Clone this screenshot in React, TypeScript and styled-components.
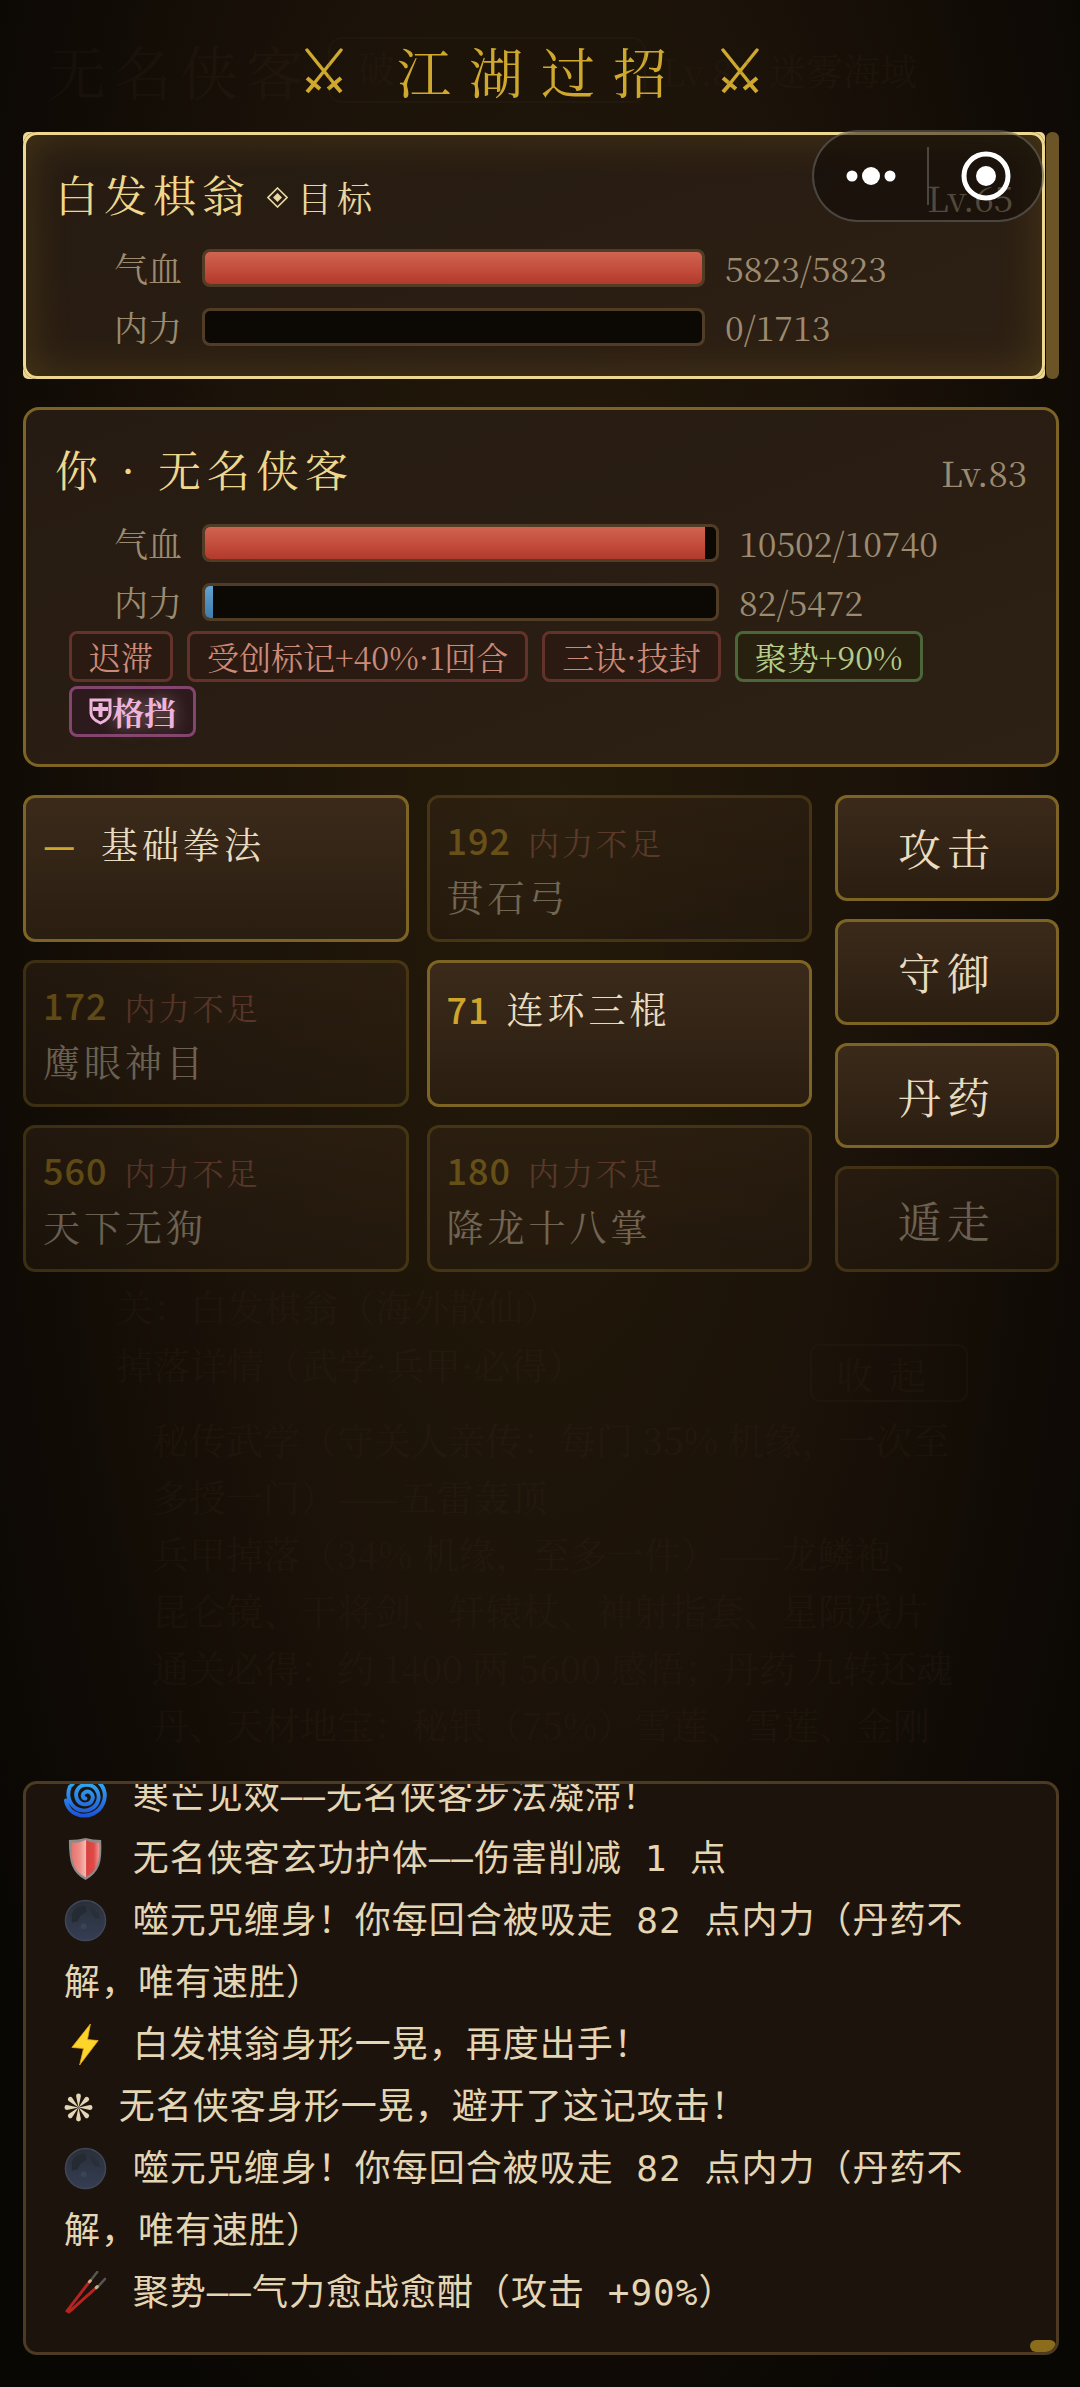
import React from 'react';
import styled, { createGlobalStyle, css } from 'styled-components';

const SERIF = `"Noto Serif CJK SC", "Noto Serif SC", "Liberation Serif", "Noto Sans CJK SC", serif`;
const SANS = `"Noto Sans CJK SC", "Noto Sans", sans-serif`;
const MONO = `"DejaVu Sans Mono", "Noto Sans CJK SC", monospace`;

const GlobalStyle = createGlobalStyle`
  *, *::before, *::after { box-sizing: border-box; }
  body { margin: 0; background: #0a0704; }
  h1, h2, p, ul { margin: 0; padding: 0; font-weight: 400; }
  ul { list-style: none; }
  button { font: inherit; color: inherit; margin: 0; }
`;

const Page = styled.main`
  position: relative;
  display: flex;
  flex-direction: column;
  min-height: 100vh;
  padding: 0 21px 32px 23px;
  overflow: hidden;
  font-family: ${SERIF};
  color: #e8dcc0;
  background: radial-gradient(ellipse 62% 78% at 50% 34%, #241a0a 0%, #1b1209 52%, #0f0a05 84%, #090704 100%);
`;

/* The page underneath, barely showing through the dark battle overlay */
const Underlay = styled.div`
  position: absolute;
  inset: 0;
  color: #4a3826;
  opacity: 0.12;
  pointer-events: none;
  font-size: 37px;
  line-height: 57px;
`;

const UnderHead = styled.div`
  display: flex;
  align-items: center;
  gap: 16px;
  height: 140px;
  padding-left: 48px;
`;

const UnderName = styled.span`
  font-size: 58px;
  letter-spacing: 8px;
`;

const UnderPill = styled.span`
  width: 318px;
  height: 66px;
  padding-left: 28px;
  border: 2px solid currentColor;
  border-radius: 14px;
`;

const UnderBody = styled.div`
  margin-top: 1137px;
  padding: 0 112px 0 116px;
`;

const UnderRow = styled.div`
  display: flex;
  justify-content: space-between;
  align-items: center;
  height: 58px;
`;

const UnderFold = styled.span`
  width: 158px;
  height: 58px;
  margin-top: 18px;
  border: 2px solid currentColor;
  border-radius: 10px;
  text-align: center;
  letter-spacing: 16px;
`;

const UnderText = styled.div`
  margin-top: 18px;
  padding-left: 36px;
  white-space: nowrap;
`;

const Header = styled.header`
  display: flex;
  justify-content: center;
  align-items: center;
  height: 132px;
  padding-top: 10px;
  color: #cfa82e;
`;

const Title = styled.h1`
  display: flex;
  align-items: center;
  gap: 36px;
  font-size: 54px;
  line-height: 72px;
  letter-spacing: 18px;
  white-space: nowrap;
`;

const SwordSvg = styled.svg`
  width: 38px;
  height: 46px;
  margin-right: 18px;
`;

const Stack = styled.div`
  position: relative;
  display: flex;
  flex-direction: column;
  gap: 28px;
`;

const EnemyScroll = styled.div`
  display: flex;
  gap: 1px;
`;

const EnemyClip = styled.div`
  flex: 1;
  overflow: hidden;
  border-radius: 5px;
`;

const ScrollThumb = styled.div`
  width: 13px;
  border-radius: 6px;
  background: #6b5426;
`;

const Card = styled.section<{ $target?: boolean }>`
  padding: 28px 29px 27px;
  border: 3px solid #7d6424;
  border-radius: 16px;
  background: linear-gradient(160deg, #261b12, #2d2014);
  ${(p) =>
    p.$target &&
    css`
      padding-bottom: 31px;
      border-color: #eed78f;
      border-radius: 14px;
      box-shadow: 0 0 0 5px #eed78f, inset 0 0 44px rgba(200, 160, 40, 0.2);
    `}
`;

const CardHead = styled.div`
  display: flex;
  align-items: center;
  height: 62px;
  margin-bottom: 24px;
`;

const Name = styled.h2`
  font-size: 43px;
  line-height: 62px;
  letter-spacing: 6px;
  color: #efd88e;
`;

const TargetMark = styled.span`
  display: flex;
  align-items: center;
  gap: 9px;
  margin-left: 16px;
  padding-top: 6px;
  font-size: 35px;
  letter-spacing: 5px;
  color: #e8d7a0;
`;

const Level = styled.span`
  margin-left: auto;
  padding-top: 6px;
  font-size: 35px;
  color: #9c8b70;
`;

const Stats = styled.div`
  display: grid;
  gap: 22px;
`;

const StatRow = styled.div`
  display: flex;
  align-items: center;
  gap: 20px;
  height: 37px;
  font-size: 34px;
  line-height: 37px;
  color: #9c8b70;
`;

const StatLabel = styled.span`
  width: 127px;
  text-align: right;
`;

const Track = styled.div`
  flex: 1;
  height: 38px;
  overflow: hidden;
  border: 3px solid #513c26;
  border-radius: 8px;
  background: #0c0804;
`;

const Fill = styled.div<{ $kind: 'hp' | 'mp' }>`
  height: 100%;
  background: ${(p) =>
    p.$kind === 'hp' ? 'linear-gradient(#cf6450, #c24a3a 60%, #b03a2d)' : 'linear-gradient(#62a3d0, #3d7cab)'};
`;

const StatValue = styled.span`
  width: 288px;
  white-space: nowrap;
`;

const Tags = styled.ul`
  display: flex;
  flex-wrap: wrap;
  gap: 4px 14px;
  margin-top: 11px;
  padding: 0 14px;
`;

const tagTone = {
  bad: css`
    color: #cc8a78;
    border-color: #62322b;
    background: #2a1a12;
  `,
  good: css`
    color: #b4cd88;
    border-color: #4b6638;
    background: #28200f;
  `,
  guard: css`
    color: #efb4dc;
    border-color: #834470;
    background: #2d1a1c;
    font-weight: 700;
    text-shadow: 0 0 16px rgba(240, 200, 200, 0.5);
  `,
};

const Tag = styled.li<{ $tone: keyof typeof tagTone }>`
  display: flex;
  align-items: center;
  height: 51px;
  padding: 0 17px;
  border: 3px solid;
  border-radius: 8px;
  font-size: 32px;
  line-height: 45px;
  white-space: nowrap;
  ${(p) => tagTone[p.$tone]}
`;

const Board = styled.div`
  display: flex;
  gap: 23px;
`;

const Skills = styled.div`
  flex: 1;
  display: grid;
  grid-template-columns: 1fr 1fr;
  grid-auto-rows: 147px;
  gap: 18px;
`;

const panelButton = css`
  border: 3px solid #7d6424;
  border-radius: 12px;
  background: linear-gradient(#3b2a1a, #2a1e11);
  &:disabled {
    opacity: 0.4;
  }
`;

const Skill = styled.button`
  ${panelButton}
  display: flex;
  flex-wrap: wrap;
  align-items: baseline;
  align-content: flex-start;
  column-gap: 17px;
  padding: 18px 17px 0;
  text-align: left;
  letter-spacing: 3px;
  &:disabled {
    padding-top: 14px;
  }
`;

const Cost = styled.span`
  min-width: 41px;
  font-family: ${SANS};
  font-size: 36px;
  font-weight: 500;
  line-height: 54px;
  letter-spacing: 1px;
  color: #d0a52c;
`;

const Reason = styled.span`
  font-size: 31px;
  line-height: 54px;
  color: #b06a58;
`;

const SkillName = styled.span<{ $below?: boolean }>`
  flex-basis: ${(p) => (p.$below ? '100%' : 'auto')};
  font-size: 37px;
  line-height: 54px;
  letter-spacing: 4px;
  color: #e8dcc0;
`;

const Actions = styled.div`
  display: grid;
  grid-auto-rows: 1fr;
  gap: 18px;
  width: 224px;
`;

const Action = styled.button`
  ${panelButton}
  padding: 0;
  font-size: 43px;
  letter-spacing: 6px;
  color: #e8dcc0;
`;

const Log = styled.section`
  position: relative;
  display: flex;
  flex-direction: column;
  justify-content: flex-end;
  height: 574px;
  margin-top: auto;
  padding: 0 38px 28px;
  overflow: hidden;
  border: 3px solid #4d3a22;
  border-radius: 14px;
  background: #1c130d;
`;

const Entry = styled.p`
  flex: none;
  font-family: ${MONO};
  font-size: 36px;
  line-height: 62px;
  letter-spacing: 1px;
  color: #e4d6b4;
`;

const EntryIcon = styled.svg`
  width: 43px;
  height: 43px;
  margin-right: 3px;
  vertical-align: -9px;
`;

const StarIcon = styled(EntryIcon)`
  width: 29px;
  height: 29px;
  vertical-align: -3px;
`;

const LogThumb = styled.span`
  position: absolute;
  right: 0;
  bottom: 0;
  width: 26px;
  height: 12px;
  border-radius: 6px;
  background: #8b6c1c;
`;

const Capsule = styled.div`
  position: absolute;
  top: 130px;
  right: 36px;
  display: flex;
  align-items: center;
  width: 232px;
  height: 92px;
  border: 2px solid rgba(255, 255, 255, 0.22);
  border-radius: 46px;
  background: rgba(10, 6, 4, 0.5);
`;

const CapsuleButton = styled.button`
  flex: 1;
  display: flex;
  justify-content: center;
  align-items: center;
  height: 100%;
  padding: 0;
  border: 0;
  background: none;
`;

const CapsuleRule = styled.span`
  width: 2px;
  height: 58px;
  background: rgba(255, 255, 255, 0.22);
`;

const Swords = () => (
  <SwordSvg viewBox="0 0 38 46" fill="none" stroke="currentColor" aria-hidden="true">
    <path d="M2 2 31 38M36 2 7 38" strokeWidth="3.4" strokeLinecap="round" />
    <path d="M23 41 36 30M15 41 2 30" strokeWidth="4" />
    <path d="M29 36 36 44M9 36 2 44" strokeWidth="4" />
  </SwordSvg>
);

const Diamond = () => (
  <svg width="21" height="21" viewBox="0 0 21 21" aria-hidden="true">
    <path d="M10.5 1 20 10.5 10.5 20 1 10.5Z" fill="none" stroke="currentColor" strokeWidth="1.6" />
    <path d="M10.5 6 15 10.5 10.5 15 6 10.5Z" fill="currentColor" />
  </svg>
);

const GuardShield = () => (
  <svg width="23" height="27" viewBox="0 0 23 27" fill="none" stroke="currentColor" aria-hidden="true">
    <path d="M2 2H21V15C21 20 16 23 11.500 25C7 23 2 20 2 15Z" strokeWidth="3" />
    <path d="M11.500 5V19M4 11H19" strokeWidth="4" />
  </svg>
);

const Cyclone = () => (
  <EntryIcon viewBox="0 0 44 44" aria-hidden="true">
    <defs>
      <linearGradient id="cyc" x1="0" y1="0" x2="0" y2="1">
        <stop offset="0" stopColor="#35b4f5" />
        <stop offset="1" stopColor="#1d55d8" />
      </linearGradient>
    </defs>
    <path
      d="M22 24C19 24 18 20 21 18C26 15 31 20 29 25C27 31 18 32 14 26C10 19 14 10 23 10C32 10 37 18 35 26C32 36 20 39 12 34C4 28 3 19 6 12M8 10C13 3 24 1 32 5C41 10 44 20 40 29C36 39 25 43 16 41C8 39 3 33 2 26"
      fill="none"
      stroke="url(#cyc)"
      strokeWidth="4"
      strokeLinecap="round"
    />
  </EntryIcon>
);

const Shield = () => (
  <EntryIcon viewBox="0 0 44 44" aria-hidden="true">
    <defs>
      <linearGradient id="shieldFace" x1="0" y1="0" x2="1" y2="0">
        <stop offset="0" stopColor="#e8736c" />
        <stop offset="0.3" stopColor="#ee8f88" />
        <stop offset="0.5" stopColor="#f6b9b2" />
        <stop offset="0.54" stopColor="#d8413f" />
        <stop offset="0.8" stopColor="#df4b48" />
        <stop offset="1" stopColor="#f09a94" />
      </linearGradient>
    </defs>
    <path d="M5 3Q15 3 22 1Q29 3 38 3Q39 20 36 29Q32 39 22 44Q12 39 8 29Q5 20 5 3Z" fill="#8f8a8a" />
    <path d="M8 6Q16 6 22 3Q28 6 36 6Q37 20 34 28Q31 37 22 41Q13 37 10 28Q7 20 8 6Z" fill="url(#shieldFace)" />
  </EntryIcon>
);

const Moon = () => (
  <EntryIcon viewBox="0 0 44 44" aria-hidden="true">
    <defs>
      <linearGradient id="moon" x1="0" y1="0" x2="0" y2="1">
        <stop offset="0" stopColor="#2a3038" />
        <stop offset="1" stopColor="#353d54" />
      </linearGradient>
    </defs>
    <circle cx="22" cy="22" r="20.500" fill="url(#moon)" stroke="#414756" strokeWidth="1.500" />
    <path d="M8 15Q12 6 22 7L23 13L17 17L14 23L8 24Z" fill="#252b32" />
    <path d="M27 9Q35 12 37 20L32 20L28 15Z" fill="#282f38" />
    <circle cx="20" cy="28" r="3" fill="#3b4359" />
  </EntryIcon>
);

const Bolt = () => (
  <EntryIcon viewBox="0 0 44 44" aria-hidden="true">
    <path d="M27 1 8 25 20 26 16 43 35 18 24 17Z" fill="#fdd52a" stroke="#e8a91c" strokeWidth="0.800" />
  </EntryIcon>
);

const Chopsticks = () => (
  <EntryIcon viewBox="0 0 44 44" strokeLinecap="round" aria-hidden="true">
    <path d="M27 10 34 1M34 17 42 8" stroke="#5a5552" strokeWidth="2.500" />
    <path d="M3 41 26 11M5 42 33 17" stroke="#b5241f" strokeWidth="3" />
    <path d="M26 11 27 10M33 17 34 16" stroke="#c9b48a" strokeWidth="3" />
  </EntryIcon>
);

const Star = () => (
  <StarIcon viewBox="0 0 30 30" fill="currentColor" aria-hidden="true">
    {[0, 45, 90, 135, 180, 225, 270, 315].map((a) => (
      <path key={a} d="M15 15 12.500 3Q12.500 0.500 15 0.500Q17.500 0.500 17.500 3Z" transform={`rotate(${a} 15 15)`} />
    ))}
  </StarIcon>
);

type StatProps = { label: string; kind: 'hp' | 'mp'; now: number; max: number };

const Stat = ({ label, kind, now, max }: StatProps) => (
  <StatRow>
    <StatLabel>{label}</StatLabel>
    <Track role="meter" aria-label={label} aria-valuenow={now} aria-valuemin={0} aria-valuemax={max}>
      <Fill $kind={kind} style={{ width: `${(now / max) * 100}%` }} />
    </Track>
    <StatValue>
      {now}/{max}
    </StatValue>
  </StatRow>
);

const skills: { cost?: number; name: string; short?: boolean }[] = [
  { name: '基础拳法' },
  { cost: 192, name: '贯石弓', short: true },
  { cost: 172, name: '鹰眼神目', short: true },
  { cost: 71, name: '连环三棍' },
  { cost: 560, name: '天下无狗', short: true },
  { cost: 180, name: '降龙十八掌', short: true },
];

const actions = [
  { name: '攻击' },
  { name: '守御' },
  { name: '丹药' },
  { name: '遁走', off: true },
];

const entries = [
  { icon: <Cyclone />, text: '寒芒见效——无名侠客步法凝滞！' },
  { icon: <Shield />, text: '无名侠客玄功护体——伤害削减 1 点' },
  { icon: <Moon />, text: '噬元咒缠身！你每回合被吸走 82 点内力（丹药不解，唯有速胜）' },
  { icon: <Bolt />, text: '白发棋翁身形一晃，再度出手！' },
  { icon: <Star />, text: '无名侠客身形一晃，避开了这记攻击！' },
  { icon: <Moon />, text: '噬元咒缠身！你每回合被吸走 82 点内力（丹药不解，唯有速胜）' },
  { icon: <Chopsticks />, text: '聚势——气力愈战愈酣（攻击 +90%）' },
];

const underLines = [
  '秘传武学（守关人亲传：每门 35% 机缘，一次至',
  '多授一门）——五雷轰顶',
  '兵甲掉落（34% 机缘，至多一件）——龙鳞袍、',
  '昆仑镜、干将剑、轩辕杖、神射指套、星陨残片',
  '通关必得：约 1400 两 5600 感悟；丹药 九转还魂',
  '丹、天材地宝：秘银（75%）雪莲、雪莲、金刚',
];

export default function App() {
  return (
    <>
      <GlobalStyle />
      <Page>
        <Underlay aria-hidden="true">
          <UnderHead>
            <UnderName>无名侠客</UnderName>
            <UnderPill>破</UnderPill>
            <span>Lv.83</span>
            <span>迷雾海域</span>
          </UnderHead>
          <UnderBody>
            <UnderRow>关：白发棋翁（海外散仙）</UnderRow>
            <UnderRow>
              掉落详情（武学·兵甲·必得）<UnderFold>收起</UnderFold>
            </UnderRow>
            <UnderText>
              {underLines.map((l) => (
                <div key={l}>{l}</div>
              ))}
            </UnderText>
          </UnderBody>
        </Underlay>

        <Header>
          <Title>
            <Swords />
            <span>江湖过招</span>
            <Swords />
          </Title>
        </Header>

        <Stack>
          <EnemyScroll>
            <EnemyClip>
              <Card $target>
                <CardHead>
                  <Name>白发棋翁</Name>
                  <TargetMark>
                    <Diamond />
                    目标
                  </TargetMark>
                  <Level>Lv.65</Level>
                </CardHead>
                <Stats>
                  <Stat label="气血" kind="hp" now={5823} max={5823} />
                  <Stat label="内力" kind="mp" now={0} max={1713} />
                </Stats>
              </Card>
            </EnemyClip>
            <ScrollThumb />
          </EnemyScroll>

          <Card>
            <CardHead>
              <Name>你 · 无名侠客</Name>
              <Level>Lv.83</Level>
            </CardHead>
            <Stats>
              <Stat label="气血" kind="hp" now={10502} max={10740} />
              <Stat label="内力" kind="mp" now={82} max={5472} />
            </Stats>
            <Tags>
              <Tag $tone="bad">迟滞</Tag>
              <Tag $tone="bad">受创标记+40%·1回合</Tag>
              <Tag $tone="bad">三诀·技封</Tag>
              <Tag $tone="good">聚势+90%</Tag>
              <Tag $tone="guard">
                <GuardShield />
                格挡
              </Tag>
            </Tags>
          </Card>

          <Board>
            <Skills>
              {skills.map((s) => (
                <Skill key={s.name} disabled={s.short}>
                  <Cost>{s.cost ?? '—'}</Cost>
                  {s.short && <Reason>内力不足</Reason>}
                  <SkillName $below={s.short}>{s.name}</SkillName>
                </Skill>
              ))}
            </Skills>
            <Actions>
              {actions.map((a) => (
                <Action key={a.name} disabled={a.off}>
                  {a.name}
                </Action>
              ))}
            </Actions>
          </Board>
        </Stack>

        <Log aria-label="战斗记录">
          {entries.map((e, i) => (
            <Entry key={i}>
              {e.icon} {e.text}
            </Entry>
          ))}
          <LogThumb />
        </Log>

        <Capsule>
          <CapsuleButton aria-label="更多">
            <svg width="50" height="20" viewBox="0 0 50 20" fill="#fff">
              <circle cx="6" cy="10" r="5.500" />
              <circle cx="25" cy="10" r="9" />
              <circle cx="44" cy="10" r="5.500" />
            </svg>
          </CapsuleButton>
          <CapsuleRule />
          <CapsuleButton aria-label="关闭">
            <svg width="50" height="50" viewBox="0 0 50 50">
              <circle cx="25" cy="25" r="22" fill="none" stroke="#fff" strokeWidth="5" />
              <circle cx="25" cy="25" r="10" fill="#fff" />
            </svg>
          </CapsuleButton>
        </Capsule>
      </Page>
    </>
  );
}
